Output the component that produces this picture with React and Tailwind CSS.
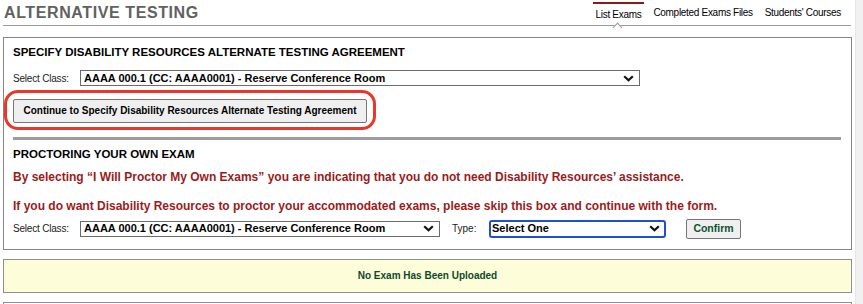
const tabs = ["List Exams", "Completed Exams Files", "Students' Courses"];

function Chevron() {
    return (
        <svg width="11" height="7" viewBox="0 0 11 7" className="shrink-0">
            <path d="M1.2 1.2 L5.5 5.3 L9.8 1.2" fill="none" stroke="#111" strokeWidth="2.2" />
        </svg>
    );
}

function FakeSelect({ value, width, focused }) {
    return (
        <div
            className={
                focused
                    ? "flex items-center justify-between h-[18px] border-2 border-[#1f4fd1] rounded-[3px] bg-white pl-[1px] pr-[4px]"
                    : "flex items-center justify-between h-[16px] border border-[#6b6b6b] bg-white pl-[3px] pr-[5px]"
            }
            style={{ width }}
        >
            <span className="text-[11px] font-bold text-black leading-none whitespace-nowrap">{value}</span>
            <Chevron />
        </div>
    );
}

export default function App() {
    return (
        <div className="flex w-[863px] h-[304px] overflow-hidden bg-white font-['Liberation_Sans',sans-serif]">
            <div className="flex-1 pl-[3px]">
                {/* Header */}
                <div className="flex justify-between h-[26px] w-[848px] border-b border-[#9a9a9a]">
                    <p className="pt-[4px] pl-[1px] text-[16px] leading-[18px] font-bold text-[#616161] tracking-[0.6px]">
                        ALTERNATIVE TESTING
                    </p>
                    <div className="flex items-start pr-[7px]">
                        {tabs.map((tab, i) => (
                            <div
                                key={tab}
                                className={
                                    i === 0
                                        ? "relative h-[25px] px-[3px] pt-[5px] mt-[2px] border-t-2 border-[#8b1a1a] text-[10px] leading-[12px] tracking-[-0.3px] text-black whitespace-nowrap"
                                        : "relative h-[25px] px-[3px] pt-[7px] ml-[6px] text-[10px] leading-[12px] tracking-[-0.3px] text-black whitespace-nowrap"
                                }
                            >
                                {tab}
                                {i === 0 && (
                                    <span className="absolute left-1/2 -bottom-[4px] -ml-[4px] w-[7px] h-[7px] rotate-45 bg-white border-l border-t border-[#9a9a9a]"></span>
                                )}
                            </div>
                        ))}
                    </div>
                </div>

                {/* Main box */}
                <div className="mt-[11px] border border-[#858585] pl-[9px] pr-[10px] pt-[7px] pb-[10px] w-[849px]">
                    <p className="text-[11.5px] leading-[14px] font-bold text-black">
                        SPECIFY DISABILITY RESOURCES ALTERNATE TESTING AGREEMENT
                    </p>
                    <div className="flex items-center mt-[11px]">
                        <span className="w-[67px] text-[10px] tracking-[-0.2px] text-[#222] whitespace-nowrap">Select Class:</span>
                        <FakeSelect value="AAAA 000.1 (CC: AAAA0001) - Reserve Conference Room" width={560} />
                    </div>
                    <div className="relative mt-[11px] w-[354px]">
                        <button className="w-[354px] h-[24px] bg-[#efefef] border border-[#767676] rounded-[2px] text-[10px] font-bold text-black whitespace-nowrap">
                            Continue to Specify Disability Resources Alternate Testing Agreement
                        </button>
                        <span className="absolute -left-[9px] -right-[9px] -top-[7px] -bottom-[7px] border-[3px] border-[#e8382b] rounded-[14px]"></span>
                    </div>
                    <div className="mt-[14px] h-[3px] bg-[#9c9c9c]"></div>

                    <p className="mt-[7px] text-[11.5px] leading-[14px] font-bold text-black">
                        PROCTORING YOUR OWN EXAM
                    </p>
                    <p className="mt-[8px] text-[12px] leading-[16px] font-bold text-[#9b1b1b] whitespace-nowrap">
                        By selecting “I Will Proctor My Own Exams” you are indicating that you do not need Disability Resources’ assistance.
                    </p>
                    <p className="mt-[13px] text-[12px] leading-[16px] font-bold text-[#9b1b1b] whitespace-nowrap">
                        If you do want Disability Resources to proctor your accommodated exams, please skip this box and continue with the form.
                    </p>
                    <div className="flex items-center h-[20px] mt-[5px]">
                        <span className="w-[67px] text-[10px] tracking-[-0.2px] text-[#222] whitespace-nowrap">Select Class:</span>
                        <FakeSelect value="AAAA 000.1 (CC: AAAA0001) - Reserve Conference Room" width={360} />
                        <span className="ml-[12px] w-[37px] text-[10px] text-[#222]">Type:</span>
                        <FakeSelect value="Select One" width={177} focused />
                        <button className="ml-[20px] w-[55px] h-[20px] bg-[#efefef] border border-[#767676] rounded-[2px] text-[10.5px] font-bold text-[#0f5132]">
                            Confirm
                        </button>
                    </div>
                </div>

                {/* Notice */}
                <div className="mt-[9px] w-[849px] h-[34px] flex items-center justify-center bg-[#fdfed9] border border-[#8f8f8f]">
                    <span className="text-[10px] font-bold text-[#0d4a2b] font-['Liberation_Sans_Narrow','Liberation_Sans',sans-serif]">
                        No Exam Has Been Uploaded
                    </span>
                </div>

                <div className="mt-[9px] w-[849px] h-[20px] border border-[#8f8f8f]"></div>
            </div>

            {/* Scrollbar track */}
            <div className="w-[8px] h-[304px] bg-[#f1f1f1] border-l border-[#e6e6e6]"></div>
        </div>
    );
}
